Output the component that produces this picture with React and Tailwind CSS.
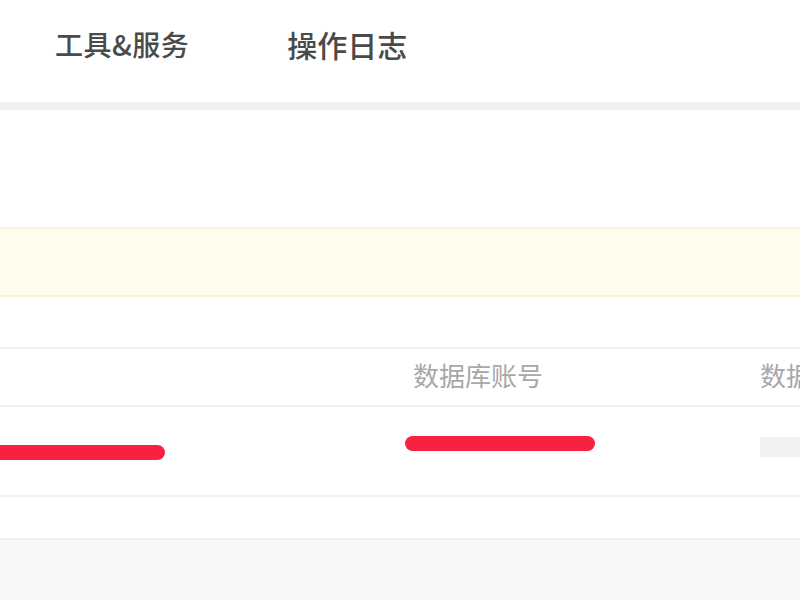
import React from "react";

const App = () => {
    return (
        <div className="w-[800px] h-[600px] overflow-hidden bg-white flex flex-col" style={{ fontFamily: '"Noto Sans CJK SC", "Noto Sans", sans-serif' }}>
            <div className="h-[102px] shrink-0 flex items-start pt-[26px]">
                <span className="ml-[55px] text-[28px] leading-[36px] font-medium text-[#4a4a4a] tracking-[0.5px]">工具&amp;服务</span>
                <span className="ml-[98px] text-[30px] leading-[36px] font-medium text-[#4a4a4a]">操作日志</span>
            </div>
            <div className="h-[8px] shrink-0 bg-[#f1f1f1]" />

            <div className="h-[117px] shrink-0" />

            <div className="h-[70px] shrink-0 bg-[#fffdee] border-y-2 border-[#fdf0d8]" />

            <div className="h-[50px] shrink-0" />

            <div className="shrink-0 border-t-2 border-[#f0f0f0]">
                <div className="h-[56px] flex items-center text-[26px] leading-[30px] text-[#a8a8a8] pb-[4px]">
                    <div className="w-[413px] shrink-0" />
                    <div className="w-[347px] shrink-0">数据库账号</div>
                    <div className="shrink-0 whitespace-nowrap">数据库</div>
                </div>
            </div>
            <div className="shrink-0 border-t-2 border-[#f0f0f0]">
                <div className="h-[88px] flex">
                    <div className="w-[405px] shrink-0 pt-[38px]">
                        <span className="block h-[15px] w-[165px] rounded-r-full bg-[#f7223f]" />
                    </div>
                    <div className="w-[355px] shrink-0 pt-[29px]">
                        <span className="block h-[15px] w-[190px] rounded-full bg-[#f7223f]" />
                    </div>
                    <div className="flex-1 pt-[30px]">
                        <span className="block h-[20px] w-[40px] bg-[#f2f2f2]" />
                    </div>
                </div>
            </div>
            <div className="h-[43px] shrink-0 border-t-2 border-[#f0f0f0]" />
            <div className="flex-1 bg-[#f8f8f8] border-t-2 border-[#f1f1f1]" />
        </div>
    );
};

export default App;
